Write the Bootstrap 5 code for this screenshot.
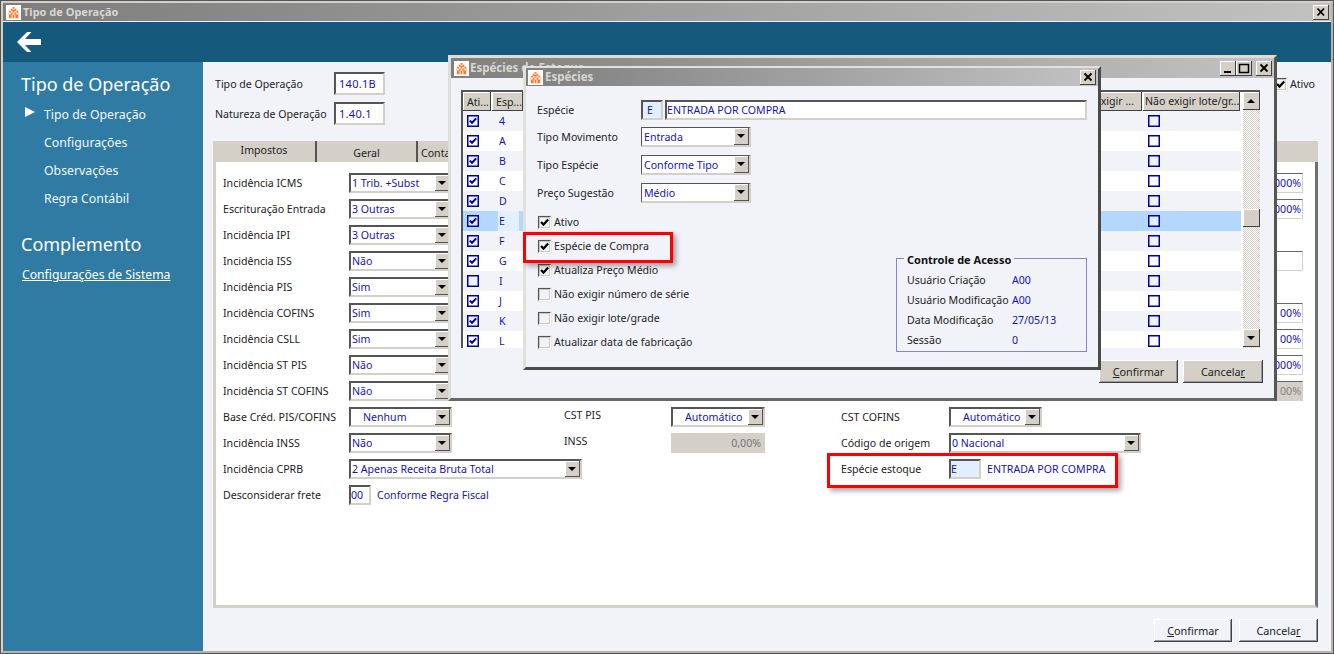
<!DOCTYPE html>
<html lang="pt">
<head>
<meta charset="utf-8">
<title>Tipo de Operação</title>
<link rel="stylesheet" href="https://cdn.jsdelivr.net/npm/bootstrap@5.3.0/dist/css/bootstrap.min.css">
<style>
html,body{height:100%;margin:0;overflow:hidden;background:#f1f3f9}
body{font-family:"Noto Sans","Liberation Sans",sans-serif;font-size:10.6px;line-height:14px;color:#222}
:root{--face:#d4d0c8;--ink:#1414b4;--pale:#f1f3f9}
.winx{width:1334px;height:654px;position:relative;background:var(--pale);border:3px solid var(--face);border-right-color:#b8b4ac;border-bottom-color:#b8b4ac;outline:1px solid #555;outline-offset:-1px}
.cap{height:19px;background:linear-gradient(90deg,#7d7d7d,#c2c2c2);color:#d8d6d0;font-weight:700;font-size:11px;padding-left:3px;gap:2px;border-bottom:1px solid #eee}
.capicon{width:15px;height:15px;flex:none}
.topbar{height:40px;background:#155a7d;padding-left:14px}
.side{width:200px;background:#2f7ba3;color:#fff;flex:none;padding:8px 0 0 18px}
.side-h{font-size:18px;line-height:28px;font-weight:400;margin:0;color:#fff}
.side-i{height:28px;font-size:12.3px;padding-left:23px;position:relative;color:#f2f6f9}
.side-i.cur{margin-top:3px}
.side-i.cur::before{content:"";position:absolute;left:4px;top:6px;border-left:10px solid #fff;border-top:5px solid transparent;border-bottom:5px solid transparent}
.side-l{font-size:12.2px;line-height:28px;color:#fff;text-decoration:underline;margin-top:3px;display:block;padding-left:1px}
.side-gap{margin-top:17px}
.mainp{padding:10px 13px 0 10px;min-width:0}
.headf{padding-left:2px;padding-right:3px;height:53px}
.lab-top{width:119px}
.tin{width:51px;height:23px;background:#fff;color:var(--ink);padding-left:3px;border:2px solid;border-color:#555 #d4d0c8 #d4d0c8 #555;letter-spacing:.3px;font-size:11px}
.mt7{margin-top:7px}
.tabs{height:21px;background:var(--face);margin-top:16px}
.tabx{height:21px;border-right:2px solid #555;text-align:center;line-height:22px;padding-top:1px}
.tabx.act{width:104px;line-height:18px;padding-top:0}
.tabg{width:101px}
.tabc{width:110px;border:0;padding-left:3px;text-align:left}
.pane{height:446px;background:#fff;border-left:3px solid var(--face);border-bottom:3px solid var(--face);border-right:3px solid #6f6f6f;padding:8px 0 0 7px}
.c-a{width:341px}
.c-b{width:277px;padding-top:234px}
.c-c{width:433px;padding-top:234px}
.c-d{width:29px}
.rw{height:26px}
.l-a{width:126px;flex:none;white-space:nowrap}
.l-b{width:107px;flex:none;margin-top:-4px}
.l-c{width:108px;flex:none}
.cb{height:20px;background:#fff;color:var(--ink);border:2px solid;border-color:#555 #d4d0c8 #d4d0c8 #555;padding-left:1px;position:relative;flex:none}
.cb.thin{border-width:1px 2px 2px 1px;padding-left:2px}
.cb::after{content:"";position:absolute;right:0;top:0;bottom:0;width:15px;background:var(--face);box-shadow:inset -1px -1px #555,inset 1px 1px #fff}
.cb::before{content:"";position:absolute;z-index:1;right:4px;top:6px;border-top:4px solid #000;border-left:4px solid transparent;border-right:4px solid transparent}
.w94{width:94px}.w93{width:93px}.w103{width:103px}.w110{width:110px}.w233{width:233px}.w192{width:192px}
.ind{padding-left:12px}
.fin{height:20px;border:2px solid;border-color:#555 #d4d0c8 #d4d0c8 #555;background:#fff;color:var(--ink);flex:none;padding-left:0}
.w22{width:22px}.w32{width:32px}
.azul{background:#e1efff}
.gry{background:#d4d0c8;color:#77757a;text-align:right;padding-right:2px;border-color:#d4d0c8}
.txt-b{color:var(--ink)}
.lnk{margin-left:6px}
.pct{width:29px;overflow:hidden;white-space:nowrap;padding-right:1px;height:20px;border:1px solid;border-color:#666 #d4d0c8 #d4d0c8 #666;background:#fff;color:var(--ink);line-height:18px}
.pct.gry{background:#d4d0c8;color:#85838a}
.rw-d{height:26px;padding-top:3px}
.foot{margin-top:11px;gap:7px}
.winbtn{height:23px;font-size:10.8px;line-height:14px;padding:0;border:0;border-radius:0;color:#222;box-shadow:inset -1px -1px #404040,inset 1px 1px #fff,inset -2px -2px #999}
.winbtn:hover{color:#222}
.w79{width:78px}.w80{width:79px}
.fp{background:var(--pale)}.fp:hover{background:var(--pale)}
.fg{background:var(--face)}.fg:hover{background:var(--face)}
.dlg{position:absolute;background:var(--pale);border:3px solid #e9e9e6;border-right-color:#4e4e4e;border-bottom-color:#4e4e4e}
.dlg1{left:445px;top:52px;width:829px;height:346px;border-color:#dedcd6 #555 #666 #dedcd6}
.dlg2{left:520px;top:63px;width:578px;height:304px;border-color:#e2e0da #4a4a4a #4a4a4a #e2e0da}
.dcap{height:20px;background:linear-gradient(90deg,#808080,#c2c2c2);color:#d8d6d0;font-weight:700;font-size:11.5px;padding-left:3px;gap:1px;padding-right:2px}
.dlg2 .dcap{height:18px;margin:-1px 0 0;padding-left:2px;gap:2px}
.tb{width:16px;height:15px;padding:0;background:var(--face);box-shadow:inset -1px -1px #404040,inset 1px 1px #fff;flex:none;display:block}
.tb svg{display:block;width:100%;height:100%}
.cap-x{margin-right:2px}
.grid{margin:12px 0 0 10px;width:799px;height:258px;border-left:2px solid #555;border-top:2px solid #555;overflow:hidden;background:#fff}
.ghead{height:19px}
.gh{height:19px;background:var(--face);box-shadow:inset -1px -1px #404040,inset 1px 1px #fff;line-height:18px;padding-left:2px;white-space:nowrap;overflow:hidden;flex:none;margin-right:1px}
.gr{height:20px}
.gr:nth-child(odd){background:var(--pale)}
.gr.sel{background:#b3d7fd;--f:#e1efff}
.k1{width:28px;flex:none;padding-left:4px;display:flex;align-items:center}
.k2{width:31px;flex:none;padding-left:8px;color:var(--ink);line-height:20px}
.k3{flex:1 1 auto}
.k4{width:97px;flex:none;padding-left:4px;display:flex;align-items:center}
.gr.sel .k2{background:#e1efff;margin-left:7px;padding-left:1px;width:21px;margin-right:3px}
.gk{width:12px;height:12px;display:block;flex:none}
.gw{width:101px}.gw2{width:97px}
.gbars{width:17px;flex:none;margin-left:2px;background:repeating-conic-gradient(#d4d0c8 0 25%,#fff 0 50%) 0 0/2px 2px;position:relative}
.sb{display:block;width:17px;height:18px;background:var(--face);box-shadow:inset -1px -1px #404040,inset 1px 1px #fff;position:relative}
.sb.up::after,.sb.dn::after{content:"";position:absolute;left:4px;top:7px;border-left:4px solid transparent;border-right:4px solid transparent}
.sb.up::after{border-bottom:4px solid #000}
.sb.dn::after{border-top:4px solid #000}
.sb.th{margin-top:99px}
.sb.dn{margin-top:102px}
.dfoot{gap:5px;margin-top:12px;padding-right:11px}
.dfoot .w79{width:79px}.dfoot .w80{width:80px}
.dbody{padding:14px 11px 0 11px}
.dl{width:104px;flex:none}
.r1{height:20px;margin-bottom:7px;gap:2px}
.r1 .dl{width:102px}
.r2{height:20px;margin-bottom:8px}
.lower{height:144px;margin-top:-1px}
.chk{height:24px;gap:3px;padding-left:1px;white-space:nowrap}
.wc{width:13px;height:13px;flex:none;background:var(--pale);border:1px solid;border-color:#555 #fff #fff #555;outline:1px solid #c8c6c0;outline-offset:-2px;box-shadow:0 0 0 1px #e8e8e4}
.wc svg{display:block;width:11px;height:11px}
.acesso{width:191px;height:94px;border:1px solid #8585cf;padding:11px 0 0 10px;position:relative;margin-bottom:2px;margin-left:auto}
.acesso-t{position:absolute;left:7px;top:-6px;background:var(--pale);padding:0 3px;font-weight:700;font-size:11px;color:#111;white-space:nowrap}
.ar{height:20px;white-space:nowrap}
.al{width:105px;flex:none}
.redx{position:absolute;border:3px solid #f00;box-shadow:3px 3px 5px rgba(0,0,0,.35);z-index:3;pointer-events:none}
.red1{left:-14px;top:-2px;width:150px;height:31px}
.red2{left:-14px;top:-3px;width:291px;height:35px}
.relx{position:relative}
</style>
</head>
<body>
<svg width="0" height="0" class="position-absolute">
<symbol id="logo" viewBox="0 0 16 16"><rect width="16" height="16" fill="#fff"/><path d="M7 2h2v2H7zM5 4h2v2H5zM9 4h2v2H9zM3 6h2v2H3zM7 5h2v3H7zM11 6h2v2h-2zM5 8h2v2H5zM9 8h2v2H9zM3 10h3v4H3zM7 10h2v4H7zM10 10h3v4h-3z" fill="#f47a2c"/><path d="M2 8h1v2H2zM13 8h1v2h-1zM6 11h1v3H6zM9 11h1v3H9z" fill="#fbbf94"/></symbol>
<symbol id="gon" viewBox="0 0 12 12"><rect x=".75" y=".75" width="10.5" height="10.5" fill="var(--f,transparent)" stroke="#0000a8" stroke-width="1.5"/><path d="M2.8 5.6 5 7.8 9.2 3.4" fill="none" stroke="#0000a8" stroke-width="2"/></symbol>
<symbol id="goff" viewBox="0 0 12 12"><rect x=".75" y=".75" width="10.5" height="10.5" fill="var(--f,transparent)" stroke="#0000a8" stroke-width="1.5"/></symbol>
<symbol id="blk" viewBox="0 0 11 11"><path d="M2 5 4.5 7.6 9.2 2.6" fill="none" stroke="#000" stroke-width="2.2"/></symbol>
</svg>

<div class="winx d-flex flex-column">
  <div class="cap d-flex align-items-center flex-none"><svg class="capicon"><use href="#logo"/></svg><span>Tipo de Operação</span><span class="ms-auto cap-x"><span class="tb"><svg viewBox="0 0 16 15"><path d="M4.500 3.500 11 10.500M11 3.500 4.500 10.500" stroke="#000" stroke-width="1.800"/></svg></span></span></div>
  <div class="topbar d-flex align-items-center">
    <svg width="24" height="20" viewBox="0 0 24 20"><path d="M0 10 10 0h4.500L8 7h16v6H8l6.500 7H10z" fill="#fff"/></svg>
  </div>
  <div class="d-flex flex-grow-1">
    <nav class="side">
      <h1 class="side-h">Tipo de Operação</h1>
      <div class="side-i cur d-flex align-items-center">Tipo de Operação</div>
      <div class="side-i d-flex align-items-center">Configurações</div>
      <div class="side-i d-flex align-items-center">Observações</div>
      <div class="side-i d-flex align-items-center">Regra Contábil</div>
      <h2 class="side-h side-gap">Complemento</h2>
      <a class="side-l" href="#">Configurações de Sistema</a>
    </nav>
    <main class="mainp flex-grow-1">
      <div class="headf d-flex justify-content-between">
        <div>
          <div class="d-flex align-items-center"><span class="lab-top">Tipo de Operação</span><span class="tin d-flex align-items-center">140.1B</span></div>
          <div class="d-flex align-items-center mt7"><span class="lab-top">Natureza de Operação</span><span class="tin d-flex align-items-center">1.40.1</span></div>
        </div>
        <div class="d-flex align-items-center chk align-self-start"><span class="wc"><svg><use href="#blk"/></svg></span><span>Ativo</span></div>
      </div>
      <div class="tabs d-flex">
        <div class="tabx act">Impostos</div>
        <div class="tabx tabg">Geral</div>
        <div class="tabx tabc">Contabilidade</div>
      </div>
      <div class="pane d-flex">
        <div class="c-a">
          <div class="rw d-flex align-items-center"><span class="l-a">Incidência ICMS</span><span class="cb w103 d-flex align-items-center">1 Trib. +Subst</span></div>
          <div class="rw d-flex align-items-center"><span class="l-a">Escrituração Entrada</span><span class="cb w103 d-flex align-items-center">3 Outras</span></div>
          <div class="rw d-flex align-items-center"><span class="l-a">Incidência IPI</span><span class="cb w103 d-flex align-items-center">3 Outras</span></div>
          <div class="rw d-flex align-items-center"><span class="l-a">Incidência ISS</span><span class="cb w103 d-flex align-items-center">Não</span></div>
          <div class="rw d-flex align-items-center"><span class="l-a">Incidência PIS</span><span class="cb w103 d-flex align-items-center">Sim</span></div>
          <div class="rw d-flex align-items-center"><span class="l-a">Incidência COFINS</span><span class="cb w103 d-flex align-items-center">Sim</span></div>
          <div class="rw d-flex align-items-center"><span class="l-a">Incidência CSLL</span><span class="cb w103 d-flex align-items-center">Sim</span></div>
          <div class="rw d-flex align-items-center"><span class="l-a">Incidência ST PIS</span><span class="cb w103 d-flex align-items-center">Não</span></div>
          <div class="rw d-flex align-items-center"><span class="l-a">Incidência ST COFINS</span><span class="cb w103 d-flex align-items-center">Não</span></div>
          <div class="rw d-flex align-items-center"><span class="l-a">Base Créd. PIS/COFINS</span><span class="cb w103 ind d-flex align-items-center">Nenhum</span></div>
          <div class="rw d-flex align-items-center"><span class="l-a">Incidência INSS</span><span class="cb w103 d-flex align-items-center">Não</span></div>
          <div class="rw d-flex align-items-center"><span class="l-a">Incidência CPRB</span><span class="cb w233 d-flex align-items-center">2 Apenas Receita Bruta Total</span></div>
          <div class="rw d-flex align-items-center"><span class="l-a">Desconsiderar frete</span><span class="fin w22 d-flex align-items-center">00</span><span class="txt-b lnk">Conforme Regra Fiscal</span></div>
        </div>
        <div class="c-b">
          <div class="rw d-flex align-items-center"><span class="l-b">CST PIS</span><span class="cb w94 ind d-flex align-items-center">Automático</span></div>
          <div class="rw d-flex align-items-center"><span class="l-b">INSS</span><span class="fin w94 gry d-flex align-items-center justify-content-end">0,00%</span></div>
        </div>
        <div class="c-c">
          <div class="rw d-flex align-items-center"><span class="l-c">CST COFINS</span><span class="cb w93 ind d-flex align-items-center">Automático</span></div>
          <div class="rw d-flex align-items-center"><span class="l-c">Código de origem</span><span class="cb w192 d-flex align-items-center">0 Nacional</span></div>
          <div class="rw d-flex align-items-center relx"><span class="redx red2"></span><span class="l-c">Espécie estoque</span><span class="fin w32 azul d-flex align-items-center">E</span><span class="txt-b lnk">ENTRADA POR COMPRA</span></div>
        </div>
        <div class="c-d">
          <div class="rw-d"><div class="pct d-flex justify-content-end">000%</div></div>
          <div class="rw-d"><div class="pct d-flex justify-content-end">000%</div></div>
          <div class="rw-d"></div>
          <div class="rw-d"><div class="pct"></div></div>
          <div class="rw-d"></div>
          <div class="rw-d"><div class="pct d-flex justify-content-end">00%</div></div>
          <div class="rw-d"><div class="pct d-flex justify-content-end">00%</div></div>
          <div class="rw-d"><div class="pct d-flex justify-content-end">000%</div></div>
          <div class="rw-d"><div class="pct gry d-flex justify-content-end">00%</div></div>
        </div>
      </div>
      <div class="foot d-flex justify-content-end">
        <button class="btn winbtn fp w79"><u>C</u>onfirmar</button>
        <button class="btn winbtn fp w80">Cancela<u>r</u></button>
      </div>
    </main>
  </div>

  <section class="dlg dlg1">
    <div class="dcap d-flex align-items-center"><svg class="capicon"><use href="#logo"/></svg><span>Espécies de Estoque</span>
      <span class="ms-auto d-flex"><span class="tb"><svg viewBox="0 0 16 15"><path d="M4 11h7" stroke="#000" stroke-width="2"/></svg></span><span class="tb ms-0"><svg viewBox="0 0 16 15"><path d="M3.500 3.500h9v8h-9z" fill="none" stroke="#000" stroke-width="1.500"/></svg></span><span class="tb ms-1"><svg viewBox="0 0 16 15"><path d="M4.500 3.500 11.500 10.500M11.500 3.500 4.500 10.500" stroke="#000" stroke-width="1.800"/></svg></span></span>
    </div>
    <div class="grid d-flex">
      <div class="flex-grow-1">
        <div class="ghead d-flex"><span class="gh k1 p-0 ps-1">Ati...</span><span class="gh k2 p-0 ps-1 text-body">Esp...</span><span class="k3"></span><span class="gh gw text-end pe-2">Não exigir ...</span><span class="gh gw2">Não exigir lote/gr...</span></div>
        <div class="gbody">
          <div class="gr d-flex"><span class="k1"><svg class="gk"><use href="#gon"/></svg></span><span class="k2">4</span><span class="k3"></span><span class="k4"><svg class="gk"><use href="#goff"/></svg></span></div>
          <div class="gr d-flex"><span class="k1"><svg class="gk"><use href="#gon"/></svg></span><span class="k2">A</span><span class="k3"></span><span class="k4"><svg class="gk"><use href="#goff"/></svg></span></div>
          <div class="gr d-flex"><span class="k1"><svg class="gk"><use href="#gon"/></svg></span><span class="k2">B</span><span class="k3"></span><span class="k4"><svg class="gk"><use href="#goff"/></svg></span></div>
          <div class="gr d-flex"><span class="k1"><svg class="gk"><use href="#gon"/></svg></span><span class="k2">C</span><span class="k3"></span><span class="k4"><svg class="gk"><use href="#goff"/></svg></span></div>
          <div class="gr d-flex"><span class="k1"><svg class="gk"><use href="#gon"/></svg></span><span class="k2">D</span><span class="k3"></span><span class="k4"><svg class="gk"><use href="#goff"/></svg></span></div>
          <div class="gr sel d-flex"><span class="k1"><svg class="gk"><use href="#gon"/></svg></span><span class="k2">E</span><span class="k3"></span><span class="k4"><svg class="gk"><use href="#goff"/></svg></span></div>
          <div class="gr d-flex"><span class="k1"><svg class="gk"><use href="#gon"/></svg></span><span class="k2">F</span><span class="k3"></span><span class="k4"><svg class="gk"><use href="#goff"/></svg></span></div>
          <div class="gr d-flex"><span class="k1"><svg class="gk"><use href="#gon"/></svg></span><span class="k2">G</span><span class="k3"></span><span class="k4"><svg class="gk"><use href="#goff"/></svg></span></div>
          <div class="gr d-flex"><span class="k1"><svg class="gk"><use href="#goff"/></svg></span><span class="k2">I</span><span class="k3"></span><span class="k4"><svg class="gk"><use href="#goff"/></svg></span></div>
          <div class="gr d-flex"><span class="k1"><svg class="gk"><use href="#gon"/></svg></span><span class="k2">J</span><span class="k3"></span><span class="k4"><svg class="gk"><use href="#goff"/></svg></span></div>
          <div class="gr d-flex"><span class="k1"><svg class="gk"><use href="#gon"/></svg></span><span class="k2">K</span><span class="k3"></span><span class="k4"><svg class="gk"><use href="#goff"/></svg></span></div>
          <div class="gr d-flex"><span class="k1"><svg class="gk"><use href="#gon"/></svg></span><span class="k2">L</span><span class="k3"></span><span class="k4"><svg class="gk"><use href="#goff"/></svg></span></div>
        </div>
      </div>
      <div class="gbars">
        <span class="sb up"></span><span class="sb th"></span><span class="sb dn"></span>
      </div>
    </div>
    <div class="dfoot d-flex justify-content-end">
      <button class="btn winbtn fg w79"><u>C</u>onfirmar</button>
      <button class="btn winbtn fg w80">Cancela<u>r</u></button>
    </div>
  </section>

  <section class="dlg dlg2">
    <div class="dcap d-flex align-items-center"><svg class="capicon"><use href="#logo"/></svg><span>Espécies</span>
      <span class="tb ms-auto"><svg viewBox="0 0 16 15"><path d="M4.500 3.500 11.500 10.500M11.500 3.500 4.500 10.500" stroke="#000" stroke-width="1.800"/></svg></span>
    </div>
    <div class="dbody">
      <div class="r1 d-flex align-items-center"><span class="dl">Espécie</span><span class="fin w22 azul d-flex align-items-center ps-1">E</span><span class="fin flex-grow-1 d-flex align-items-center">ENTRADA POR COMPRA</span></div>
      <div class="r2 d-flex align-items-center"><span class="dl">Tipo Movimento</span><span class="cb thin w110 d-flex align-items-center">Entrada</span></div>
      <div class="r2 d-flex align-items-center"><span class="dl">Tipo Espécie</span><span class="cb thin w110 d-flex align-items-center">Conforme Tipo</span></div>
      <div class="r2 d-flex align-items-center"><span class="dl">Preço Sugestão</span><span class="cb thin w110 d-flex align-items-center">Médio</span></div>
      <div class="lower d-flex align-items-end">
        <div>
          <div class="chk d-flex align-items-center"><span class="wc"><svg><use href="#blk"/></svg></span><span>Ativo</span></div>
          <div class="chk d-flex align-items-center relx"><span class="redx red1"></span><span class="wc"><svg><use href="#blk"/></svg></span><span>Espécie de Compra</span></div>
          <div class="chk d-flex align-items-center"><span class="wc"><svg><use href="#blk"/></svg></span><span>Atualiza Preço Médio</span></div>
          <div class="chk d-flex align-items-center"><span class="wc"></span><span>Não exigir número de série</span></div>
          <div class="chk d-flex align-items-center"><span class="wc"></span><span>Não exigir lote/grade</span></div>
          <div class="chk d-flex align-items-center"><span class="wc"></span><span>Atualizar data de fabricação</span></div>
        </div>
        <div class="acesso">
          <span class="acesso-t">Controle de Acesso</span>
          <div class="ar d-flex align-items-center"><span class="al">Usuário Criação</span><span class="txt-b">A00</span></div>
          <div class="ar d-flex align-items-center"><span class="al">Usuário Modificação</span><span class="txt-b">A00</span></div>
          <div class="ar d-flex align-items-center"><span class="al">Data Modificação</span><span class="txt-b">27/05/13</span></div>
          <div class="ar d-flex align-items-center"><span class="al">Sessão</span><span class="txt-b">0</span></div>
        </div>
      </div>
    </div>
  </section>
</div>
<script src="https://cdn.jsdelivr.net/npm/bootstrap@5.3.0/dist/js/bootstrap.bundle.min.js"></script>
</body>
</html>
